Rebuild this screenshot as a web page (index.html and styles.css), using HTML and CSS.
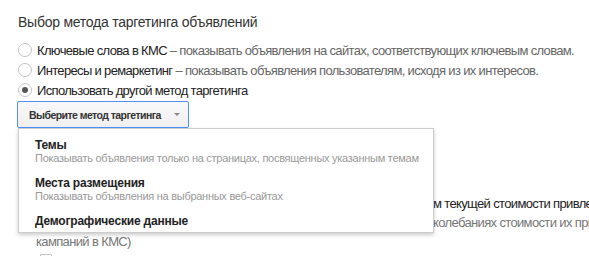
FILE: index.html
```html
<!DOCTYPE html>
<html lang="ru">
<head>
<meta charset="utf-8">
<link rel="stylesheet" href="styles.css">
</head>
<body>
<div class="page">
  <h1 class="title">Выбор метода таргетинга объявлений</h1>
  <div class="radios">
    <label class="radio-row"><span class="radio"></span><span class="label">Ключевые слова в КМС</span><span class="desc">&nbsp;– показывать объявления на сайтах, соответствующих ключевым словам.</span></label>
    <label class="radio-row"><span class="radio"></span><span class="label">Интересы и ремаркетинг</span><span class="desc">&nbsp;– показывать объявления пользователям, исходя из их интересов.</span></label>
    <label class="radio-row"><span class="radio checked"></span><span class="label">Использовать другой метод таргетинга</span></label>
  </div>
  <div class="menu-wrap">
    <button class="menu-btn"><span class="btn-text">Выберите метод таргетинга</span><span class="caret"></span></button>
    <div class="menu">
      <div class="item">
        <div class="item-title">Темы</div>
        <div class="item-desc">Показывать объявления только на страницах, посвященных указанным темам</div>
      </div>
      <div class="item">
        <div class="item-title">Места размещения</div>
        <div class="item-desc">Показывать объявления на выбранных веб-сайтах</div>
      </div>
      <div class="item last">
        <div class="item-title">Демографические данные</div>
      </div>
    </div>
  </div>
  <div class="behind">
    <div class="bg-line dark"><span class="covered"></span>м текущей стоимости привлечения</div>
    <div class="bg-line gray"><span class="covered"></span>колебаниях стоимости их привлечения</div>
    <div class="bg-line gray">кампаний в КМС)</div>
    <div class="check-row"><span class="checkbox"></span></div>
  </div>
</div>
</body>
</html>
```
FILE: styles.css
```css
html, body {
  margin: 0;
  padding: 0;
  background: #fff;
  overflow: hidden;
}
body {
  font-family: "Liberation Sans", Arial, sans-serif;
  width: 589px;
  height: 256px;
}
.page {
  padding: 0 0 0 18px;
  position: relative;
  overflow: hidden;
  height: 256px;
  box-sizing: border-box;
}
.title {
  margin: 0;
  padding-top: 13px;
  font-size: 14px;
  font-weight: normal;
  line-height: 19px;
  letter-spacing: -0.25px;
  color: #333;
}
.radios {
  margin-top: 8px;
  display: flex;
  flex-direction: column;
}
.radio-row {
  display: flex;
  align-items: center;
  height: 20px;
  font-size: 13px;
  letter-spacing: -0.66px;
  white-space: nowrap;
}
.radio {
  width: 12px;
  height: 12px;
  border: 1px solid #c4c4c4;
  border-radius: 50%;
  background: #fff;
  box-sizing: content-box;
  margin-right: 5px;
  display: flex;
  align-items: center;
  justify-content: center;
  flex: none;
}
.radio.checked::after {
  content: "";
  width: 6px;
  height: 6px;
  border-radius: 50%;
  background: #555;
}
.label {
  color: #222;
}
.desc {
  color: #666;
}
.menu-wrap {
  position: relative;
  margin-top: 1px;
}
.menu-btn {
  display: flex;
  align-items: center;
  height: 27px;
  width: 172px;
  padding: 0 0 0 11px;
  margin: 0 0 0 -1px;
  border: 1px solid #4d90fe;
  border-radius: 2px;
  background: linear-gradient(#f8f8f8, #f0f0f0);
  font-family: "Liberation Sans", Arial, sans-serif;
  font-size: 10.5px;
  font-weight: bold;
  color: #333;
  box-sizing: border-box;
  white-space: nowrap;
}
.btn-text {
  letter-spacing: -0.55px;
}
.caret {
  margin-left: 13px;
  width: 0;
  height: 0;
  border-left: 3px solid transparent;
  border-right: 3px solid transparent;
  border-top: 3px solid #888;
}
.menu {
  position: absolute;
  left: 0;
  top: 27px;
  width: 414px;
  background: #fff;
  border: 1px solid rgba(0,0,0,0.2);
  box-shadow: 0 2px 4px rgba(0,0,0,0.2);
  padding-top: 4px;
  z-index: 2;
}
.item {
  padding: 5px 16px 7px;
}
.item.last {
  padding-bottom: 4px;
}
.item-title {
  font-size: 12px;
  font-weight: bold;
  line-height: 14px;
  letter-spacing: -0.2px;
  color: #222;
}
.item-desc {
  font-size: 11px;
  line-height: 12px;
  letter-spacing: -0.27px;
  color: #999;
  white-space: nowrap;
}
.behind {
  padding-left: 18px;
  padding-top: 66px;
  font-size: 13px;
  letter-spacing: -0.64px;
  overflow: hidden;
}
.bg-line {
  line-height: 19px;
  white-space: nowrap;
  overflow: hidden;
}
.bg-line.dark { color: #222; }
.bg-line.gray { color: #777; }
.covered {
  display: inline-block;
  width: 397px;
  height: 1px;
}
.check-row {
  padding: 3px 0 0 4px;
}
.checkbox {
  display: block;
  width: 10px;
  height: 10px;
  border: 1px solid #c6c6c6;
  border-radius: 1px;
}
```
